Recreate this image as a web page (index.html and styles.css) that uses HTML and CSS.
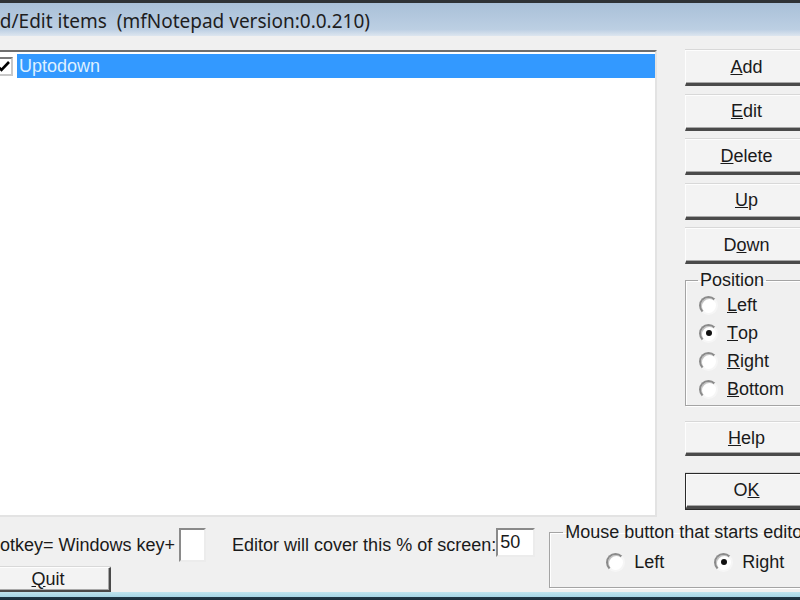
FILE: index.html
```html
<!DOCTYPE html>
<html lang="en">
<head>
  <meta charset="UTF-8">
  <title>Add/Edit items</title>
  <link rel="stylesheet" href="styles.css">
</head>
<body>

<div class="dialog">
  <div class="titlebar">
    <span class="title">Add/Edit items&nbsp; (mfNotepad version:0.0.210)</span>
  </div>

  <div class="client">
    <div class="main">
      <div class="listbox">
        <div class="item">
          <span class="check">
            <svg width="15" height="15" viewBox="0 0 15 15"><path d="M2 7.5 L5.5 11 L13 3" fill="none" stroke="#000" stroke-width="2.6"/></svg>
          </span>
          <span class="item-text">Uptodown</span>
        </div>
      </div>

      <div class="side">
        <button class="btn"><u>A</u>dd</button>
        <button class="btn"><u>E</u>dit</button>
        <button class="btn"><u>D</u>elete</button>
        <button class="btn"><u>U</u>p</button>
        <button class="btn">D<u>o</u>wn</button>

        <fieldset class="group position">
          <legend>Position</legend>
          <label class="radio"><span class="circle"></span><u>L</u>eft</label>
          <label class="radio"><span class="circle checked"></span><u>T</u>op</label>
          <label class="radio"><span class="circle"></span><u>R</u>ight</label>
          <label class="radio"><span class="circle"></span><u>B</u>ottom</label>
        </fieldset>

        <button class="btn help"><u>H</u>elp</button>
        <button class="btn ok">O<u>K</u></button>
      </div>
    </div>

    <div class="bottom">
      <div class="bottom-left">
        <div class="hotkey-row">
          <span class="lbl">Hotkey= Windows key+</span>
          <span class="edit key"></span>
          <span class="lbl cover">Editor will cover this % of screen:</span>
          <span class="edit pct">50</span>
        </div>
        <button class="btn quit"><u>Q</u>uit</button>
      </div>

      <fieldset class="group mouse">
        <legend>Mouse button that starts editor</legend>
        <div class="radio-row">
          <label class="radio left-btn"><span class="circle"></span>Left</label>
          <label class="radio"><span class="circle checked"></span>Right</label>
        </div>
      </fieldset>
    </div>
  </div>

  <div class="frame-bottom"></div>
</div>

</body>
</html>
```

FILE: styles.css
```css
body {
  margin: 0;
  background: #f0f0f0;
  font-family: 'Liberation Sans', Arial, sans-serif;
  font-size: 18px;
  color: #1a1a1a;
  overflow: hidden;
}
.dialog {
  width: 840px;
  margin-left: -14px;
  height: 600px;
  display: flex;
  flex-direction: column;
}
.titlebar {
  height: 33px;
  border-top: 3px solid #2e3236;
  background: linear-gradient(#a9c0d8, #bccfe3 80%, #dde6ef);
  display: flex;
  align-items: center;
}
.title {
  font-family: 'Noto Sans', sans-serif;
  font-size: 19px;
  color: #1e1e1e;
  margin-left: -10px;
  margin-top: 2px;
  white-space: nowrap;
}
.client {
  background: #f0f0f0;
  padding-top: 14px;
  height: 542px;
}
.main {
  display: flex;
  height: 465px;
}
.listbox {
  width: 667px;
  height: 461px;
  background: #fff;
  border: 2px solid;
  border-color: #6e6e6e #e3e3e3 #e3e3e3 #6e6e6e;
  padding-top: 2px;
}
.item {
  display: flex;
  align-items: center;
  height: 24px;
}
.check {
  width: 15px;
  height: 15px;
  margin-left: 6px;
  border: 2px solid;
  border-color: #7a7a7a #c8c8c8 #c8c8c8 #7a7a7a;
  background: #fff;
  display: flex;
}
.item-text {
  flex: 1;
  margin-left: 4px;
  height: 24px;
  line-height: 24px;
  background: #3399ff;
  color: #def0ff;
  padding-left: 2px;
}
.side {
  margin-left: 28px;
  width: 124px;
  display: flex;
  flex-direction: column;
  gap: 8.5px;
}
.btn {
  font-family: 'Liberation Sans', Arial, sans-serif;
  font-size: 18px;
  color: #1a1a1a;
  background: #f3f3f3;
  height: 36px;
  width: 124px;
  padding: 0;
  border: solid;
  border-width: 1px 2px 3px 1px;
  border-color: #fdfdfd #4a4a4a #4a4a4a #fdfdfd;
  box-shadow: inset -1px -1px #a8a8a8, 0 -1px #d8d8d8;
  flex-shrink: 0;
}
.group {
  margin: 0;
  border: 1px solid #a4a4a4;
  box-shadow: inset 1px 1px #fff, 1px 1px #fff;
  min-width: 0;
}
.group legend {
  padding: 0 2px;
  line-height: 21px;
}
.position {
  margin-top: -2.5px;
  padding: 0 0 2px 12px;
}
.radio {
  display: flex;
  align-items: center;
  height: 28px;
}
.position .radio {
  margin-left: 1px;
}
.circle {
  width: 15px;
  height: 15px;
  border-radius: 50%;
  border: 2px solid;
  border-color: #8a8a8a #f6f6f6 #f6f6f6 #8a8a8a;
  background: #fff;
  margin-right: 9px;
  position: relative;
  box-shadow: inset 1px 1px #c4c4c4;
}
.circle.checked::after {
  content: '';
  position: absolute;
  left: 4.5px;
  top: 4.5px;
  width: 6px;
  height: 6px;
  border-radius: 50%;
  background: #111;
}
.help {
  margin-top: 7.5px;
  height: 34px;
}
.ok {
  margin-top: 8.5px;
  height: 37px;
  outline: 1px solid #2a2a2a;
  outline-offset: -1px;
  border-width: 2px 3px 4px 2px;
}
.bottom {
  display: flex;
  margin-top: 7px;
}
.bottom-left {
  display: flex;
  flex-direction: column;
}
.hotkey-row {
  display: flex;
  align-items: flex-start;
  margin-top: 6px;
  padding-left: 1px;
  height: 34px;
}
.lbl {
  line-height: 34px;
  white-space: nowrap;
}
.edit {
  background: #fff;
  border: 2px solid;
  border-color: #8a8a8a #ececec #ececec #8a8a8a;
  box-sizing: border-box;
}
.key {
  width: 27px;
  height: 34px;
  margin-left: 4px;
}
.cover {
  margin-left: 26px;
}
.pct {
  width: 39px;
  height: 29px;
  line-height: 25px;
  padding-left: 2px;
}
.quit {
  margin-top: 5px;
  height: 26px;
  width: 125px;
}
.mouse {
  margin-left: 14px;
  width: 280px;
  padding: 0 0 11px 13px;
  height: 66px;
  box-sizing: border-box;
}
.radio-row {
  display: flex;
  margin-top: 5px;
}
.mouse .radio {
  margin-left: 43px;
}
.mouse .left-btn {
  width: 108px;
}
.mouse .left-btn + .radio {
  margin-left: 0;
}
.frame-bottom {
  height: 8px;
  background: linear-gradient(#bfe4ee, #a6d6e6 60%, #1f3847 62%, #1a2f3c);
}
```
